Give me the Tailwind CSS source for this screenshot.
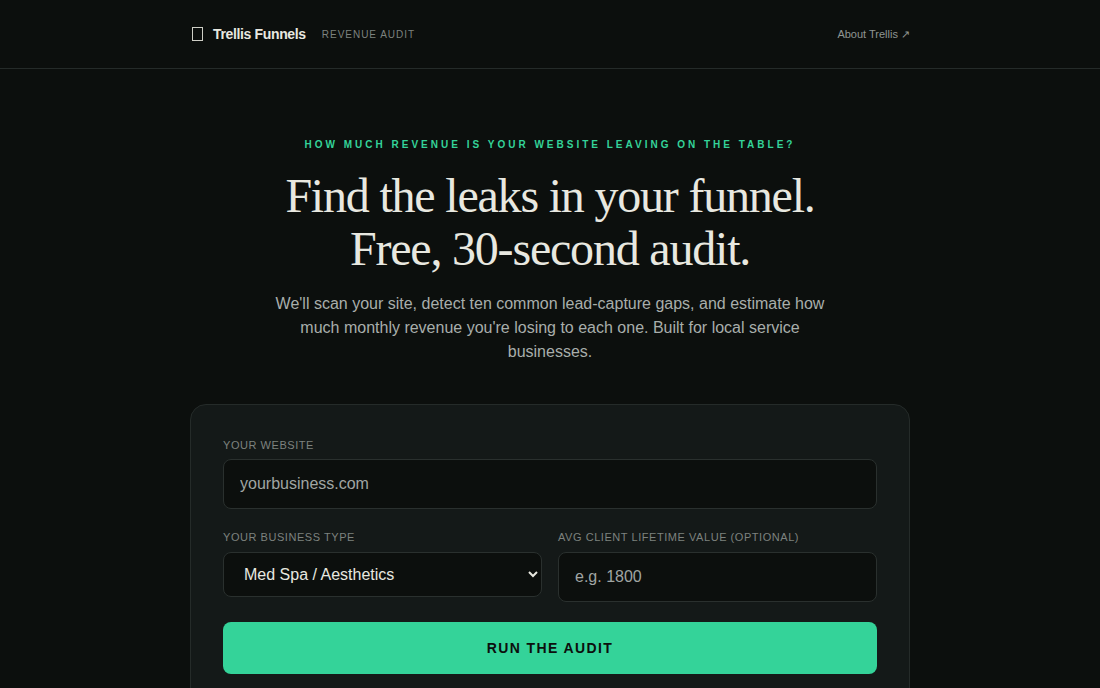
<!DOCTYPE html>
<html lang="en">
	<head>
		<meta charset="UTF-8" />
		<meta name="viewport" content="width=device-width, initial-scale=1.0" />
		<title>Trellis Funnels - Revenue Audit</title>
		<script src="https://cdn.jsdelivr.net/npm/@tailwindcss/browser@4"></script>
	</head>
	<body class="bg-[#0c0f0d] text-white font-['Liberation_Sans',sans-serif] h-[688px] overflow-hidden">
		<header class="h-[69px] border-b border-[#252b29]">
			<div class="w-[720px] h-full mx-auto flex items-center justify-between">
				<div class="flex items-center">
					<span class="ml-[2px] w-[11px] h-[14px] border border-[#cfcfc6] mr-[10px]"></span>
					<span class="text-[14px] font-bold tracking-[-0.35px] text-[#e8e8e0]">Trellis Funnels</span>
					<span class="ml-4 text-[10px] tracking-[0.98px] text-[#7d827f]">REVENUE AUDIT</span>
				</div>
				<a class="text-[11px] text-[#8f9592]">About Trellis ↗</a>
			</div>
		</header>

		<main class="w-[720px] mx-auto">
			<section class="pt-[70px] flex flex-col items-center text-center">
				<p class="text-[10px] leading-[12px] font-bold tracking-[3px] text-[#34d399]">HOW MUCH REVENUE IS YOUR WEBSITE LEAVING ON THE TABLE?</p>
				<h1 class="mt-[18px] font-['Liberation_Serif',serif] text-[48px] leading-[53px] tracking-[-1.2px] text-[#e8e8e0]">Find the leaks in your funnel.<br />Free, 30-second audit.</h1>
				<p class="mt-[17px] w-[560px] text-[16px] leading-[24px] text-[#a8aeab]">We'll scan your site, detect ten common lead-capture gaps, and estimate how much monthly revenue you're losing to each one. Built for local service businesses.</p>
			</section>

			<form class="mt-[40px] bg-[#141918] border border-[#252b29] rounded-2xl px-8 pt-[34px] pb-8">
				<label class="block text-[11px] leading-[13px] tracking-[0.55px] text-[#7d827f]">YOUR WEBSITE</label>
				<input type="text" placeholder="yourbusiness.com" class="mt-[7px] w-full h-[50px] px-4 bg-[#0c0f0d] border border-[#2a302e] rounded-lg text-[16px] outline-none placeholder:text-[#a0a5a3]" />
				<div class="mt-[22px] grid grid-cols-2 gap-4 items-start">
					<div>
						<label class="block text-[11px] leading-[13px] tracking-[0.55px] text-[#7d827f]">YOUR BUSINESS TYPE</label>
						<select class="mt-2 w-full h-[45px] px-4 bg-[#0c0f0d] border border-[#2a302e] rounded-lg text-[16px] text-[#e8e8e0] outline-none">
							<option>Med Spa / Aesthetics</option>
						</select>
					</div>
					<div>
						<label class="block text-[11px] leading-[13px] tracking-[0.55px] text-[#7d827f]">AVG CLIENT LIFETIME VALUE (OPTIONAL)</label>
						<input type="text" placeholder="e.g. 1800" class="mt-2 w-full h-[50px] px-4 bg-[#0c0f0d] border border-[#2a302e] rounded-lg text-[16px] outline-none placeholder:text-[#a0a5a3]" />
					</div>
				</div>
				<button type="button" class="mt-5 w-full h-[52px] bg-[#34d399] rounded-lg text-[14px] font-bold tracking-[1.4px] text-[#0c0f0d]">RUN THE AUDIT</button>
			</form>
		</main>
	</body>
</html>
